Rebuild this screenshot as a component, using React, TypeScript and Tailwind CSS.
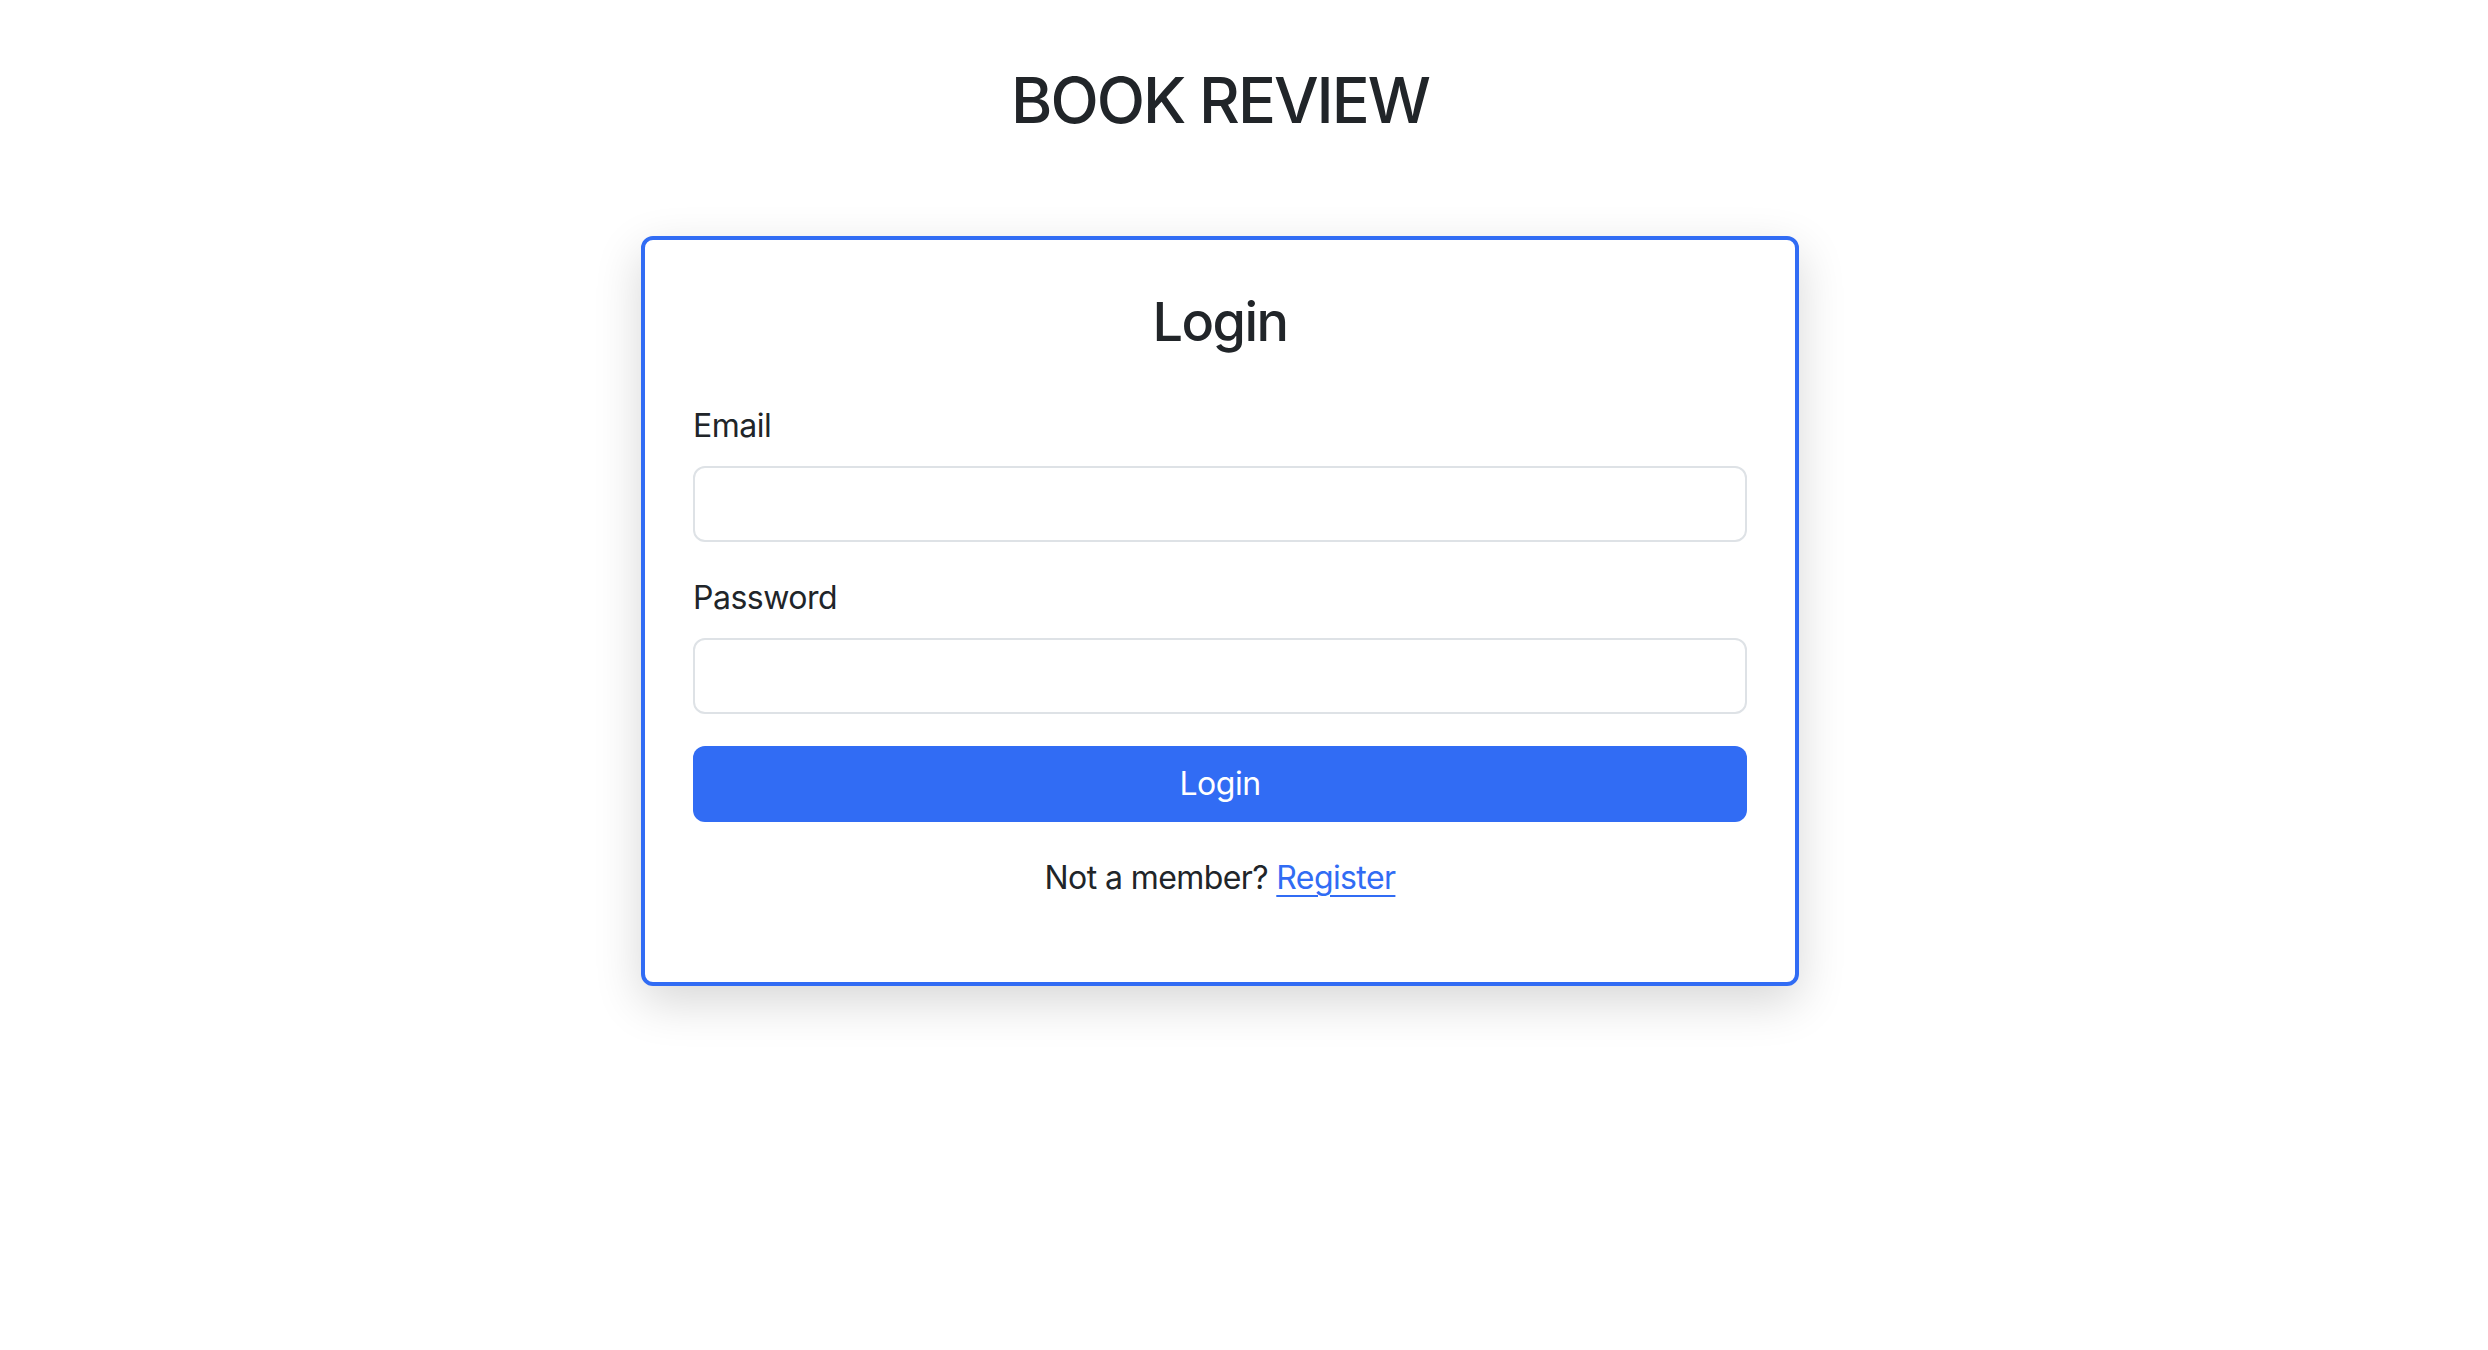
export default function App() {
  return (
    <div className="min-h-screen bg-white pr-[48px] text-[#212529] font-['Inter','Noto_Sans',sans-serif]">
      <div className="flex flex-col items-center pt-[63px]">
        <h2 className="text-[63px] leading-[1.2] font-medium tracking-[-2px]">BOOK REVIEW</h2>

        <div className="mt-[97px] w-[1158px] rounded-[12px] border-[4px] border-[#316cf4] bg-white p-[48px] shadow-[0_16px_48px_rgba(0,0,0,0.16)]">
          <h3 className="mb-[48px] pt-[2px] text-center text-[54px] leading-[1.2] font-medium tracking-[-1.5px]">Login</h3>

          <form onSubmit={(e) => e.preventDefault()}>
            <div className="mb-[32px]">
              <label className="mb-[16px] block text-[32px] leading-[1.5] tracking-[-0.5px]">Email</label>
              <input
                type="email"
                className="block h-[76px] w-full rounded-[12px] border-[2px] border-[#dee2e6] bg-white px-[24px] text-[32px] outline-none"
              />
            </div>
            <div className="mb-[32px]">
              <label className="mb-[16px] block text-[32px] leading-[1.5] tracking-[-0.5px]">Password</label>
              <input
                type="password"
                className="block h-[76px] w-full rounded-[12px] border-[2px] border-[#dee2e6] bg-white px-[24px] text-[32px] outline-none"
              />
            </div>
            <button
              type="submit"
              className="block h-[76px] w-full rounded-[12px] bg-[#316cf4] text-[32px] leading-[1.5] tracking-[-0.5px] text-white"
            >
              Login
            </button>
          </form>

          <p className="mt-[32px] mb-[32px] text-center text-[32px] leading-[1.5] tracking-[-0.6px]">
            Not a member?{' '}
            <a href="#" className="text-[#316cf4] underline underline-offset-[6px] decoration-[2px]">
              Register
            </a>
          </p>
        </div>
      </div>
    </div>
  );
}
